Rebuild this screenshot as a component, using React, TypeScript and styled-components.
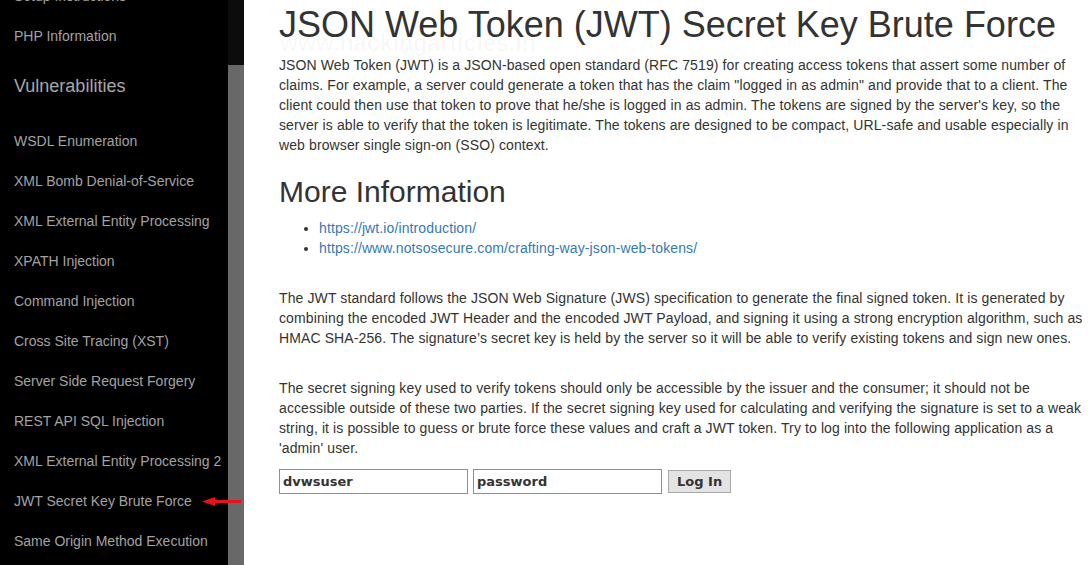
import React from "react";
import styled, { createGlobalStyle } from "styled-components";

const Global = createGlobalStyle`
  html, body {
    margin: 0;
    padding: 0;
    background: #fff;
    overflow: hidden;
  }
  body {
    font-family: "Liberation Sans", Arial, sans-serif;
  }
`;

const Page = styled.div`
  display: flex;
  height: 565px;
  position: relative;
`;

const Sidebar = styled.nav`
  width: 228px;
  background: #000;
  overflow: hidden;
  flex-shrink: 0;
`;

const NavList = styled.div`
  margin-top: -24px;
  display: flex;
  flex-direction: column;
`;

const NavItem = styled.div`
  height: 40px;
  line-height: 40px;
  padding-left: 14px;
  font-size: 14px;
  color: #a3a3a3;
  white-space: nowrap;
`;

const NavHeading = styled.div`
  padding: 16px 0 21px 14px;
  line-height: 28px;
  font-size: 18px;
  color: #a8a8a8;
`;

const ScrollTrack = styled.div`
  width: 16px;
  background: #0c0c0c;
  display: flex;
  flex-direction: column;
  flex-shrink: 0;
`;

const ScrollThumb = styled.div`
  margin-top: 65px;
  flex: 1;
  background: #686868;
`;

const Content = styled.main`
  position: relative;
  padding: 5px 0 0 35px;
  width: 806px;
  color: #333;
  font-size: 14px;
  line-height: 20px;
  letter-spacing: 0.11px;
`;

const Title = styled.h1`
  margin: 0 0 10px;
  font-size: 36px;
  font-weight: 500;
  line-height: 40px;
  letter-spacing: 0;
  white-space: nowrap;
`;

const Subtitle = styled.h2`
  margin: 20px 0 10px;
  font-size: 30px;
  font-weight: 500;
  line-height: 33px;
  letter-spacing: 0;
`;

const Para = styled.p<{ $gap?: number }>`
  margin: ${(p) => p.$gap ?? 0}px 0 0;
`;

const Links = styled.ul`
  margin: 0;
  padding-left: 40px;
`;

const Link = styled.a`
  color: #337ab7;
  text-decoration: none;
`;

const Watermark = styled.div`
  position: absolute;
  left: 36px;
  top: 33px;
  font-size: 23px;
  font-weight: bold;
  color: rgba(0, 0, 0, 0.03);
  pointer-events: none;
  white-space: nowrap;
`;

const Form = styled.form`
  margin-top: 11px;
  display: flex;
  align-items: center;
  gap: 5px;
`;

const Field = styled.input`
  width: 189px;
  height: 25px;
  box-sizing: border-box;
  border: 1px solid #8f8f8f;
  padding: 0 3px;
  font-family: "DejaVu Sans", Verdana, sans-serif;
  font-weight: bold;
  font-size: 13px;
  color: #333;
`;

const Button = styled.button`
  margin-left: 1px;
  height: 23px;
  padding: 0 8px;
  border: 1px solid #a9a9a9;
  background: #e3e3e3;
  font-family: "DejaVu Sans", Verdana, sans-serif;
  font-weight: bold;
  font-size: 13px;
  color: #333;
`;

const Arrow = styled.svg`
  position: absolute;
  left: 202px;
  top: 496px;
`;

const navTop = ["Setup Instructions", "PHP Information"];
const navVulns = [
  "WSDL Enumeration",
  "XML Bomb Denial-of-Service",
  "XML External Entity Processing",
  "XPATH Injection",
  "Command Injection",
  "Cross Site Tracing (XST)",
  "Server Side Request Forgery",
  "REST API SQL Injection",
  "XML External Entity Processing 2",
  "JWT Secret Key Brute Force",
  "Same Origin Method Execution",
];

export default function App() {
  return (
    <Page>
      <Global />
      <Sidebar>
        <NavList>
          {navTop.map((n) => (
            <NavItem key={n}>{n}</NavItem>
          ))}
          <NavHeading>Vulnerabilities</NavHeading>
          {navVulns.map((n) => (
            <NavItem key={n}>{n}</NavItem>
          ))}
        </NavList>
      </Sidebar>
      <ScrollTrack>
        <ScrollThumb />
      </ScrollTrack>
      <Content>
        <Title>JSON Web Token (JWT) Secret Key Brute Force</Title>
        <Watermark>www.hackingarticles.in</Watermark>
        <Para>
          JSON Web Token (JWT) is a JSON-based open standard (RFC 7519) for creating access tokens that assert some number of
          claims. For example, a server could generate a token that has the claim "logged in as admin" and provide that to a client. The
          client could then use that token to prove that he/she is logged in as admin. The tokens are signed by the server's key, so the
          server is able to verify that the token is legitimate. The tokens are designed to be compact, URL-safe and usable especially in
          web browser single sign-on (SSO) context.
        </Para>
        <Subtitle>More Information</Subtitle>
        <Links>
          <li>
            <Link href="#">https://jwt.io/introduction/</Link>
          </li>
          <li>
            <Link href="#">https://www.notsosecure.com/crafting-way-json-web-tokens/</Link>
          </li>
        </Links>
        <Para $gap={30}>
          The JWT standard follows the JSON Web Signature (JWS) specification to generate the final signed token. It is generated by
          combining the encoded JWT Header and the encoded JWT Payload, and signing it using a strong encryption algorithm, such as
          HMAC SHA-256. The signature’s secret key is held by the server so it will be able to verify existing tokens and sign new ones.
        </Para>
        <Para $gap={30}>
          The secret signing key used to verify tokens should only be accessible by the issuer and the consumer; it should not be
          accessible outside of these two parties. If the secret signing key used for calculating and verifying the signature is set to a weak
          string, it is possible to guess or brute force these values and craft a JWT token. Try to log into the following application as a
          'admin' user.
        </Para>
        <Form onSubmit={(e) => e.preventDefault()}>
          <Field defaultValue="dvwsuser" />
          <Field defaultValue="password" />
          <Button type="submit">Log In</Button>
        </Form>
      </Content>
      <Arrow width="40" height="11" viewBox="0 0 40 11">
        <line x1="9" y1="5.5" x2="39" y2="5.5" stroke="#e8101a" strokeWidth="3" />
        <polygon points="0,5.5 13,1 13,10" fill="#e8101a" />
      </Arrow>
    </Page>
  );
}
